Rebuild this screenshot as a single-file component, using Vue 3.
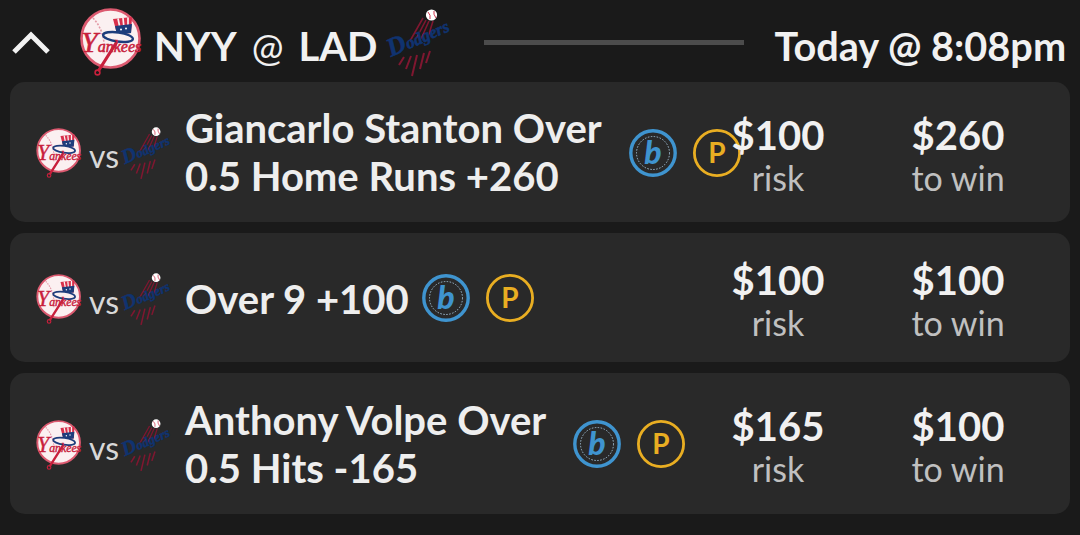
<script setup>
import { h } from 'vue'

const bets = [
  { lines: ['Giancarlo Stanton Over', '0.5 Home Runs +260'], risk: '$100', win: '$260' },
  { lines: ['Over 9 +100'], risk: '$100', win: '$100' },
  { lines: ['Anthony Volpe Over', '0.5 Hits -165'], risk: '$165', win: '$100' },
]

const line = (d, stroke, w, extra = {}) =>
  h('path', { d, stroke, 'stroke-width': w, fill: 'none', ...extra })

const Yankees = () =>
  h('svg', { viewBox: '0 0 62 68' }, [
    h('circle', { cx: 30.5, cy: 30.5, r: 29, fill: '#fbf0f1', stroke: '#dc5a70', 'stroke-width': 2.6 }),
    line('M13 10 Q26 24 24 46', '#e39aa6', 1.6, { 'stroke-dasharray': '2 1.5' }),
    line('M38 32 L19 62', '#c8203c', 3.2, { 'stroke-linecap': 'round' }),
    h('circle', { cx: 17.5, cy: 64.5, r: 2.4, fill: 'none', stroke: '#c8203c', 'stroke-width': 1.6 }),
    h('path', { d: 'M33 11 L52 9 L51 25 L37 26 Z', fill: '#d8304c' }),
    line('M38 10.5 L41 25 M43 10 L44.5 25 M48 9.5 L48 25', '#fbf0f1', 1.7),
    h('path', { d: 'M35 18 L52 16 L51 25 L37 27 Z', fill: '#1d3d7c' }),
    h('circle', { cx: 41, cy: 21.5, r: 1, fill: '#fff' }),
    h('circle', { cx: 46, cy: 20.5, r: 1, fill: '#fff' }),
    h('ellipse', { cx: 38, cy: 29, rx: 15, ry: 4.6, fill: '#fbf0f1', stroke: '#1d3d7c', 'stroke-width': 2.4, transform: 'rotate(8 38 29)' }),
    h('text', {
      x: 1, y: 44, fill: '#c8203c', stroke: '#c8203c', 'stroke-width': 0.5,
      'font-family': 'Liberation Serif, serif', 'font-style': 'italic', 'font-size': 16,
    }, [h('tspan', { 'font-size': 30 }, 'Y'), 'ankees']),
  ])

const Dodgers = () =>
  h('svg', { viewBox: '0 0 62 67' }, [
    line('M36 11 L26 30 M39 12 L31 30 M33 9 L20 32 M43 12 L38 28', '#7f1730', 1.6),
    line('M14 48 L9 56 M21 47 L16 60 M27 46 L22 67 M34 44 L30 60 M40 42 L36 54', '#7f1730', 2),
    h('circle', { cx: 41.5, cy: 6, r: 5.6, fill: '#fff' }),
    line('M38 3 Q41 6 40 10 M44 2 Q43 5 46 9', '#c8203c', 0.9),
    h('text', {
      x: 1, y: 48, fill: '#103370', stroke: '#103370', 'stroke-width': 0.6,
      'font-family': 'Liberation Serif, serif', 'font-style': 'italic', 'font-weight': 700, 'font-size': 17,
      transform: 'rotate(-24 1 48)',
    }, [h('tspan', { 'font-size': 26 }, 'D'), 'odgers']),
  ])
</script>

<template>
  <main class="page">
    <header class="head">
      <svg class="chev" viewBox="0 0 38 23"><path d="M2 21 L19 4 L36 21" fill="none" stroke="#f2f2f2" stroke-width="5" /></svg>
      <Yankees class="ny-lg" />
      <span class="team">NYY</span>
      <span class="at">@</span>
      <span class="team">LAD</span>
      <Dodgers class="la-lg" />
      <span class="rule"></span>
      <span class="time">Today @ 8:08pm</span>
    </header>

    <section class="cards">
      <article v-for="(b, i) in bets" :key="i" class="card" :class="{ tall: b.lines.length > 1 }">
        <div class="left">
          <Yankees class="ny-sm" />
          <span class="vs">vs</span>
          <Dodgers class="la-sm" />
          <div class="title">
            <div v-for="l in b.lines" :key="l">{{ l }}</div>
          </div>
          <svg class="chip" viewBox="0 0 48 48">
            <circle cx="24" cy="24" r="22.2" fill="none" stroke="#3f94cf" stroke-width="3.4" />
            <circle cx="24" cy="24" r="16.5" fill="none" stroke="#a8c8e0" stroke-width="0.9" stroke-dasharray="1.5 1.5" />
            <text x="24" y="35" text-anchor="middle" class="b-text">b</text>
          </svg>
          <svg class="chip p" viewBox="0 0 48 48">
            <circle cx="24" cy="24" r="22.6" fill="none" stroke="#e9ae22" stroke-width="2.8" />
            <text x="24" y="34" text-anchor="middle" class="p-text">P</text>
          </svg>
        </div>
        <div class="amt"><b>{{ b.risk }}</b><span>risk</span></div>
        <div class="amt"><b>{{ b.win }}</b><span>to win</span></div>
      </article>
    </section>
  </main>
</template>

<style>
html, body { margin: 0; background: #1a1a1a; }
</style>

<style scoped>
.page {
  width: 1080px; height: 535px; box-sizing: border-box; overflow: hidden;
  background: #1a1a1a; color: #f1f1f1;
  font-family: Lato, "Liberation Sans", sans-serif;
}
.head { height: 82px; display: flex; align-items: center; padding: 0 12px; box-sizing: border-box; }
.chev { width: 38px; height: 23px; margin: 2px 30px 0 0; flex: none; }
.ny-lg { width: 62px; height: 68px; margin: 2px 12px 0 0; flex: none; overflow: visible; }
.la-lg { width: 62px; height: 67px; margin: 2px 32px 0 13px; flex: none; overflow: visible; }
.team { font-size: 40px; font-weight: 700; line-height: 1; margin-top: 9px; }
.at { font-size: 38px; font-weight: 400; line-height: 1; margin: 9px 15px 0; }
.rule { width: 260px; height: 5px; background: #4c4c4c; margin-top: 2px; flex: none; }
.time { font-size: 39.7px; font-weight: 700; margin: 9px 0 0 30px; white-space: nowrap; }
.cards { display: flex; flex-direction: column; gap: 11px; padding: 0 10px; }
.card {
  height: 129px; border-radius: 15px; background: #292929;
  display: flex; align-items: center; padding-right: 22px; box-sizing: border-box;
}
.card.tall { height: 140px; }
.card:nth-child(3) { height: 141px; }
.left { flex: 1; min-width: 0; display: flex; align-items: center; padding-left: 26px; white-space: nowrap; }
.ny-sm { width: 46px; height: 50px; flex: none; margin-top: 2px; overflow: visible; }
.la-sm { width: 48px; height: 52px; flex: none; margin: 2px 13px 0 5px; overflow: visible; }
.vs { font-size: 32px; line-height: 1; margin: 8px 0 0 7px; color: #d8d8d8; }
.title { font-size: 40px; font-weight: 700; line-height: 48px; margin: 2px 13px 0 0; color: #eeeeee; }
.tall .title { margin: 0 27px 0 0; }
.chip { width: 48px; height: 48px; flex: none; margin-top: 1px; }
.chip.p { margin-left: 16px; }
.b-text { font: italic 900 32px Lato, sans-serif; fill: #3f94cf; }
.p-text { font: 700 28px Lato, sans-serif; fill: #e9ae22; }
.amt { width: 180px; flex: none; display: flex; flex-direction: column; align-items: center; padding-top: 7px; }
.amt b { font-size: 40px; font-weight: 700; line-height: 44px; color: #f1f1f1; }
.amt span { font-size: 34px; line-height: 42px; color: #c0c0c0; }
</style>
